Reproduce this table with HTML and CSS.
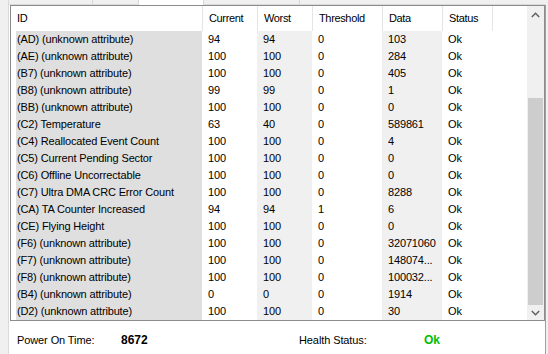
FILE: index.html
```html
<!DOCTYPE html>
<html>
<head>
<meta charset="utf-8">
<link rel="stylesheet" href="styles.css">
</head>
<body>
<div class="tabs">
  <div class="tab t1"></div>
  <div class="tab t2"></div>
  <div class="tab sel"></div>
  <div class="tab t4"></div>
  <div class="tabfill"></div>
</div>
<div class="page">
  <div class="list">
    <div class="table">
      <div class="hdr">
        <div class="h">ID</div>
        <div class="h">Current</div>
        <div class="h">Worst</div>
        <div class="h">Threshold</div>
        <div class="h">Data</div>
        <div class="h">Status</div>
        <div class="h"></div>
      </div>
      <div class="row"><div class="c id">(AD) (unknown attribute)</div><div class="c">94</div><div class="c g">94</div><div class="c">0</div><div class="c g">103</div><div class="c">Ok</div></div>
      <div class="row"><div class="c id">(AE) (unknown attribute)</div><div class="c">100</div><div class="c g">100</div><div class="c">0</div><div class="c g">284</div><div class="c">Ok</div></div>
      <div class="row"><div class="c id">(B7) (unknown attribute)</div><div class="c">100</div><div class="c g">100</div><div class="c">0</div><div class="c g">405</div><div class="c">Ok</div></div>
      <div class="row"><div class="c id">(B8) (unknown attribute)</div><div class="c">99</div><div class="c g">99</div><div class="c">0</div><div class="c g">1</div><div class="c">Ok</div></div>
      <div class="row"><div class="c id">(BB) (unknown attribute)</div><div class="c">100</div><div class="c g">100</div><div class="c">0</div><div class="c g">0</div><div class="c">Ok</div></div>
      <div class="row"><div class="c id">(C2) Temperature</div><div class="c">63</div><div class="c g">40</div><div class="c">0</div><div class="c g">589861</div><div class="c">Ok</div></div>
      <div class="row"><div class="c id">(C4) Reallocated Event Count</div><div class="c">100</div><div class="c g">100</div><div class="c">0</div><div class="c g">4</div><div class="c">Ok</div></div>
      <div class="row"><div class="c id">(C5) Current Pending Sector</div><div class="c">100</div><div class="c g">100</div><div class="c">0</div><div class="c g">0</div><div class="c">Ok</div></div>
      <div class="row"><div class="c id">(C6) Offline Uncorrectable</div><div class="c">100</div><div class="c g">100</div><div class="c">0</div><div class="c g">0</div><div class="c">Ok</div></div>
      <div class="row"><div class="c id">(C7) Ultra DMA CRC Error Count</div><div class="c">100</div><div class="c g">100</div><div class="c">0</div><div class="c g">8288</div><div class="c">Ok</div></div>
      <div class="row"><div class="c id">(CA) TA Counter Increased</div><div class="c">94</div><div class="c g">94</div><div class="c">1</div><div class="c g">6</div><div class="c">Ok</div></div>
      <div class="row"><div class="c id">(CE) Flying Height</div><div class="c">100</div><div class="c g">100</div><div class="c">0</div><div class="c g">0</div><div class="c">Ok</div></div>
      <div class="row"><div class="c id">(F6) (unknown attribute)</div><div class="c">100</div><div class="c g">100</div><div class="c">0</div><div class="c g">32071060</div><div class="c">Ok</div></div>
      <div class="row"><div class="c id">(F7) (unknown attribute)</div><div class="c">100</div><div class="c g">100</div><div class="c">0</div><div class="c g">148074...</div><div class="c">Ok</div></div>
      <div class="row"><div class="c id">(F8) (unknown attribute)</div><div class="c">100</div><div class="c g">100</div><div class="c">0</div><div class="c g">100032...</div><div class="c">Ok</div></div>
      <div class="row"><div class="c id">(B4) (unknown attribute)</div><div class="c">0</div><div class="c g">0</div><div class="c">0</div><div class="c g">1914</div><div class="c">Ok</div></div>
      <div class="row"><div class="c id">(D2) (unknown attribute)</div><div class="c">100</div><div class="c g">100</div><div class="c">0</div><div class="c g">30</div><div class="c">Ok</div></div>
    </div>
    <div class="scrollbar">
      <div class="arrow up"><svg width="9" height="6" viewBox="0 0 9 6"><polyline points="0.8,5 4.5,1.3 8.2,5" fill="none" stroke="#606060" stroke-width="1.5"/></svg></div>
      <div class="track"></div>
      <div class="thumb"></div>
      <div class="arrow down"><svg width="9" height="6" viewBox="0 0 9 6"><polyline points="0.8,1 4.5,4.7 8.2,1" fill="none" stroke="#606060" stroke-width="1.5"/></svg></div>
    </div>
  </div>
  <div class="footer">
    <span class="lbl l1">Power On Time:</span>
    <span class="val v1">8672</span>
    <span class="lbl l2">Health Status:</span>
    <span class="val ok">Ok</span>
  </div>
</div>
</body>
</html>
```

FILE: styles.css
```css
html, body {
  margin: 0;
  padding: 0;
}
body {
  width: 548px;
  height: 354px;
  overflow: hidden;
  background: #f0f0f0;
  font-family: "Liberation Sans", Arial, sans-serif;
  font-size: 11px;
  color: #000;
}
.tabs {
  display: flex;
  height: 5px;
  padding-left: 8px;
}
.tab {
  box-sizing: border-box;
  height: 5px;
  border-left: 1px solid #d9d9d9;
  border-bottom: 1px solid #d9d9d9;
  background: #f0f0f0;
}
.t1 { width: 84px; }
.t2 { width: 46px; }
.sel {
  width: 65px;
  background: #fff;
  border-bottom: none;
}
.t4 {
  width: 97px;
  border-right: 1px solid #d9d9d9;
}
.tabfill {
  flex: 1;
  border-bottom: 1px solid #d9d9d9;
  margin-right: 2px;
}
.page {
  box-sizing: border-box;
  width: 538px;
  height: 349px;
  margin-left: 8px;
  background: #fff;
  border-left: 1px solid #d9d9d9;
  border-right: 1px solid #a0a0a0;
  padding-left: 1px;
}
.list {
  box-sizing: border-box;
  width: 535px;
  height: 316px;
  border: 1px solid #8c8c8c;
  display: flex;
  background: #fff;
}
.table {
  width: 516px;
  overflow: hidden;
}
.hdr, .row {
  display: grid;
  grid-template-columns: 191px 55px 55px 70px 60px 50px 35px;
}
.hdr {
  height: 25px;
  letter-spacing: -0.35px;
}
.h {
  line-height: 25px;
  padding-left: 6px;
  white-space: nowrap;
  border-left: 1px solid #e5e5e5;
}
.h:first-child {
  border-left: none;
}
.row {
  height: 17px;
  letter-spacing: -0.15px;
}
.c {
  line-height: 17px;
  padding-left: 6px;
  white-space: nowrap;
  overflow: hidden;
}
.c.id {
  margin-left: 5px;
  padding-left: 1px;
  background: #dfdfdf;
}
.c.g {
  background: #f0f0f0;
}
.scrollbar {
  width: 17px;
  background: #f0f0f0;
  display: flex;
  flex-direction: column;
}
.arrow {
  display: flex;
  align-items: center;
  justify-content: center;
}
.arrow.up { height: 17px; }
.arrow.down { height: 15px; }
.track { height: 75px; }
.thumb {
  height: 207px;
  margin: 0 1px;
  background: #cdcdcd;
}
.footer {
  display: flex;
  padding-top: 12px;
  padding-left: 7px;
  line-height: 14px;
  font-size: 11px;
}
.lbl {
  letter-spacing: -0.1px;
}
.l1 { width: 104px; }
.v1 { width: 178px; }
.l2 { width: 125px; }
.val {
  font-weight: bold;
  font-size: 12px;
}
.ok {
  color: #00c000;
}
```
